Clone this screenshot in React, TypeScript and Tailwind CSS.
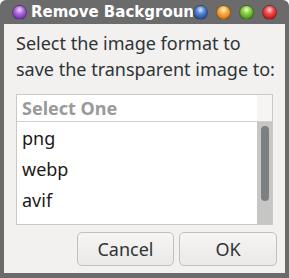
const balls = [
  "bg-[radial-gradient(circle_at_50%_30%,#d9e6ff_0%,#5a86d6_35%,#2a4f9e_75%,#1b3570_100%)]",
  "bg-[radial-gradient(circle_at_50%_30%,#fff2d0_0%,#f8b048_35%,#e07b10_75%,#9a4d05_100%)]",
  "bg-[radial-gradient(circle_at_50%_30%,#eaffd0_0%,#8ed048_35%,#4e9a18_75%,#2e6408_100%)]",
  "bg-[radial-gradient(circle_at_50%_30%,#ffd6d6_0%,#f05050_35%,#c81818_75%,#7e0808_100%)]",
];

function Ball({ cls }: { cls: string }) {
  return (
    <div className={`w-[15px] h-[15px] rounded-full shrink-0 border border-[#3a3a3a]/60 ${cls}`} />
  );
}

const items = ["png", "webp", "avif"];

export default function App() {
  return (
    <div className="w-[289px] h-[278px] bg-white overflow-hidden">
      <div className="w-full h-full bg-[#6b6b6b] rounded-t-[6px] flex flex-col font-['Noto_Sans',sans-serif]">
        {/* title bar */}
        <div className="h-[24px] flex items-center pl-[12px] pr-[12px] shrink-0">
          <Ball cls="bg-[radial-gradient(circle_at_50%_30%,#f0d8ff_0%,#b070e0_35%,#7a34b0_75%,#4a1470_100%)]" />
          <div className="ml-[4px] w-[162px] overflow-hidden whitespace-nowrap text-white font-bold text-[15px] leading-[24px] font-['DejaVu_Sans',sans-serif]">
            Remove Background Image
          </div>
          <div className="ml-auto flex items-center gap-[8px]">
            {balls.map((b, i) => (
              <Ball key={i} cls={b} />
            ))}
          </div>
        </div>

        {/* body */}
        <div className="h-[249px] shrink-0 mx-[4px] bg-[#f2f1f0] flex flex-col px-[12px] pt-[6px] overflow-hidden">
          <p className="text-[18px] leading-[26px] text-[#2e3436] whitespace-nowrap">
            Select the image format to
            <br />
            save the transparent image to:
          </p>

          <div className="mt-[12px] h-[131px] shrink-0 border border-[#cdc7c2] bg-white flex flex-col">
            <div className="h-[27px] shrink-0 border-b border-[#d6d1cd] flex">
              <div className="flex-1 pl-[5px] text-[18px] leading-[26px] font-bold text-[#9a9a9a]">Select One</div>
              <div className="w-[15px] bg-[#f6f5f4]" />
            </div>
            <div className="flex-1 flex min-h-0">
              <div className="flex-1 pl-[5px] pt-[1px]">
                {items.map((it) => (
                  <div key={it} className="h-[31px] leading-[30px] text-[18px] text-[#1a1a1a]">
                    {it}
                  </div>
                ))}
              </div>
              <div className="w-[15px] bg-[#c6c6c4] flex justify-center pt-[4px]">
                <div className="w-[8px] h-[75px] rounded-full bg-[#7c8080]" />
              </div>
            </div>
          </div>

          <div className="mt-[7px] flex justify-end gap-[5px] mr-[-4px]">
            <button className="w-[97px] h-[34px] rounded-[5px] border border-[#c4bfba] bg-[linear-gradient(#f6f5f4,#ebe9e7)] text-[18px] text-[#2e3436]">
              Cancel
            </button>
            <button className="w-[98px] h-[34px] rounded-[5px] border border-[#c4bfba] bg-[linear-gradient(#f6f5f4,#ebe9e7)] text-[18px] text-[#2e3436]">
              OK
            </button>
          </div>
        </div>
      </div>
    </div>
  );
}
